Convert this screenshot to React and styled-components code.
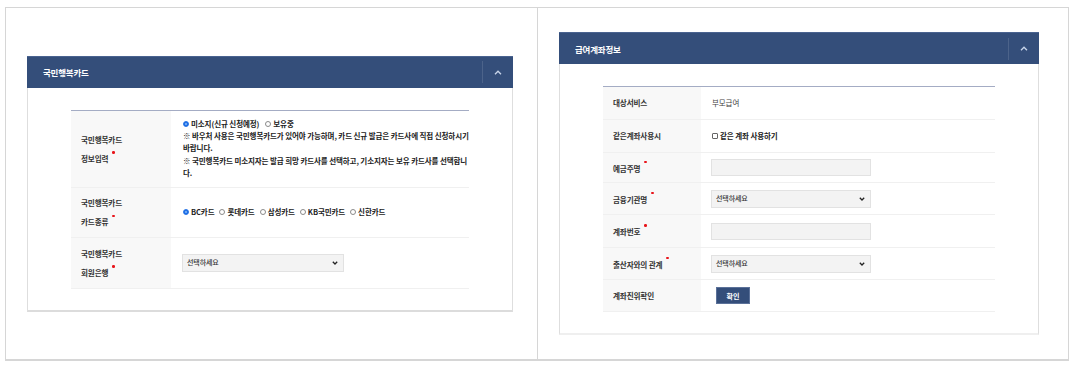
import React from "react";
import styled, { createGlobalStyle } from "styled-components";

const Global = createGlobalStyle`
  html, body { margin: 0; padding: 0; background: #fff; }
  body { font-family: "Noto Sans CJK KR", "Noto Sans", sans-serif; color: #333; }
`;

const Frame = styled.div`
  margin: 7px 0 0 5px;
  width: 1064px;
  height: 354px;
  box-sizing: border-box;
  border: 1px solid #d6d6d6;
  border-bottom-width: 2px;
  display: grid;
  grid-template-columns: 531px 1fr;
`;

const Cell = styled.div`
  display: flex;
  align-items: center;
  padding-left: ${(p) => p.$pl}px;
  border-left: ${(p) => (p.$divider ? "1px solid #d6d6d6" : "none")};
`;

const Card = styled.div`
  width: ${(p) => p.$w}px;
  box-sizing: border-box;
  border: 1px solid #dedede;
  border-top: none;
  border-bottom: 2px solid ${(p) => (p.$softBottom ? "#efefef" : "#dcdcdc")};
  background: #fff;
`;

const Header = styled.div`
  height: 32px;
  margin: 0 -1px;
  background: #344e7a;
  border-top: 1px solid #4a6390;
  box-sizing: border-box;
  display: flex;
  align-items: center;
  justify-content: space-between;
  padding-left: 16px;
`;

const Title = styled.h3`
  margin: 0;
  font-size: 8.5px;
  font-weight: 700;
  color: #fff;
  letter-spacing: -0.2px;
`;

const Toggle = styled.div`
  width: 30px;
  height: 22px;
  border-left: 1px solid rgba(255, 255, 255, 0.12);
  display: flex;
  align-items: center;
  justify-content: center;
`;

const Body = styled.div`
  padding: 22px 43px 21px 43px;
`;

const Table = styled.div`
  border-top: 1px solid #a4acc4;
  display: grid;
  grid-template-columns: ${(p) => p.$label}px 1fr;
`;

const Label = styled.div`
  background: #f8f8f8;
  border-bottom: 1px solid #f0f0f0;
  min-height: ${(p) => p.$h}px;
  box-sizing: border-box;
  padding-left: 10px;
  display: flex;
  align-items: center;
  font-size: 7.6px;
  font-weight: 700;
  color: #333;
  line-height: ${(p) => (p.$tall ? "19px" : "12px")};
  letter-spacing: -0.15px;
`;

const Value = styled.div`
  border-bottom: 1px solid #f0f0f0;
  min-height: ${(p) => p.$h}px;
  box-sizing: border-box;
  padding-left: ${(p) => p.$pl || 11}px;
  display: flex;
  flex-direction: column;
  justify-content: center;
  font-size: 7.5px;
  font-weight: 700;
  color: #222;
  line-height: 12.3px;
  letter-spacing: -0.1px;
`;

const Plain = styled.span`
  font-weight: 400;
  color: #444;
`;

const Req = styled.span`
  display: inline-block;
  width: 2.5px;
  height: 2.5px;
  border-radius: 50%;
  background: #e8151b;
  margin-left: 4px;
  vertical-align: 8px;
`;

const Line = styled.div`
  white-space: nowrap;
`;

const Options = styled.div`
  display: flex;
  align-items: center;
  gap: ${(p) => p.$gap || 5}px;
`;

const Option = styled.span`
  display: inline-flex;
  align-items: center;
  gap: 2px;
  white-space: nowrap;
`;

const Radio = styled.span`
  display: inline-block;
  width: 6px;
  height: 6px;
  box-sizing: border-box;
  border-radius: 50%;
  border: 1px solid ${(p) => (p.$on ? "#1f6fe5" : "#8a8a8a")};
  background: ${(p) =>
    p.$on ? "radial-gradient(circle, #6aa6f5 0 1.2px, #1f6fe5 1.4px)" : "#fff"};
`;

const Check = styled.span`
  display: inline-block;
  width: 6px;
  height: 6px;
  box-sizing: border-box;
  border: 1px solid #666;
  border-radius: 1px;
  margin-right: 0;
`;

const SelectBox = styled.div`
  width: ${(p) => p.$w}px;
  height: 18px;
  box-sizing: border-box;
  background: #f3f3f3;
  border: 1px solid #e2e2e2;
  display: flex;
  align-items: center;
  justify-content: space-between;
  padding: 0 5px 0 4px;
  font-size: 7px;
  font-weight: 500;
  color: #333;
`;

const Input = styled.div`
  width: 160px;
  height: 17px;
  box-sizing: border-box;
  background: #f3f3f3;
  border: 1px solid #e2e2e2;
`;

const Button = styled.button`
  width: 34px;
  height: 17px;
  margin-left: 5px;
  padding: 0;
  background: #344e7a;
  border: 1px solid #5b7199;
  color: #fff;
  font-family: inherit;
  font-size: 7px;
  font-weight: 700;
  cursor: pointer;
`;

const Chevron = ({ color = "#c9d5ea" }) => (
  <svg width="8" height="5" viewBox="0 0 8 5">
    <polyline points="1,4.2 4,1.2 7,4.2" fill="none" stroke={color} strokeWidth="1.3" />
  </svg>
);

const Down = () => (
  <svg width="6" height="4" viewBox="0 0 6 4">
    <polyline points="0.8,0.8 3,3 5.2,0.8" fill="none" stroke="#222" strokeWidth="1.3" />
  </svg>
);

const Select = ({ w }) => (
  <SelectBox $w={w}>
    <span>선택하세요</span>
    <Down />
  </SelectBox>
);

const Panel = ({ title, w, softBottom, children }) => (
  <Card $w={w} $softBottom={softBottom}>
    <Header>
      <Title>{title}</Title>
      <Toggle>
        <Chevron />
      </Toggle>
    </Header>
    <Body>{children}</Body>
  </Card>
);

const cards = ["BC카드", "롯데카드", "삼성카드", "KB국민카드", "신한카드"];

export default function App() {
  return (
    <>
      <Global />
      <Frame>
        <Cell $pl={21}>
          <Panel title="국민행복카드" w={486}>
            <Table $label={100}>
              <Label $h={77} $tall>
                <div>
                  국민행복카드
                  <br />
                  정보입력
                  <Req />
                </div>
              </Label>
              <Value $h={77} $pl={12}>
                <Options $gap={6}>
                  <Option>
                    <Radio $on />
                    미소지(신규 신청예정)
                  </Option>
                  <Option>
                    <Radio />
                    보유중
                  </Option>
                </Options>
                <Line>※ 바우처 사용은 국민행복카드가 있어야 가능하며, 카드 신규 발급은 카드사에 직접 신청하시기</Line>
                <Line>바랍니다.</Line>
                <Line>※ 국민행복카드 미소지자는 발급 희망 카드사를 선택하고, 기소지자는 보유 카드사를 선택합니</Line>
                <Line>다.</Line>
              </Value>

              <Label $h={50} $tall>
                <div>
                  국민행복카드
                  <br />
                  카드종류
                  <Req />
                </div>
              </Label>
              <Value $h={50} $pl={12}>
                <Options>
                  {cards.map((c, i) => (
                    <Option key={c}>
                      <Radio $on={i === 0} />
                      {c}
                    </Option>
                  ))}
                </Options>
              </Value>

              <Label $h={51} $tall>
                <div>
                  국민행복카드
                  <br />
                  회원은행
                  <Req />
                </div>
              </Label>
              <Value $h={51} $pl={11}>
                <Select w={162} />
              </Value>
            </Table>
          </Panel>
        </Cell>

        <Cell $pl={21} $divider>
          <Panel title="급여계좌정보" w={480} softBottom>
            <Table $label={98}>
              <Label $h={33}>대상서비스</Label>
              <Value $h={33}>
                <Plain>부모급여</Plain>
              </Value>

              <Label $h={33}>같은계좌사용시</Label>
              <Value $h={33}>
                <Option>
                  <Check />
                  같은 계좌 사용하기
                </Option>
              </Value>

              <Label $h={30}>
                <span>
                  예금주명
                  <Req />
                </span>
              </Label>
              <Value $h={30} $pl={10}>
                <Input />
              </Value>

              <Label $h={32}>
                <span>
                  금융기관명
                  <Req />
                </span>
              </Label>
              <Value $h={32} $pl={10}>
                <Select w={160} />
              </Value>

              <Label $h={33}>
                <span>
                  계좌번호
                  <Req />
                </span>
              </Label>
              <Value $h={33} $pl={10}>
                <Input />
              </Value>

              <Label $h={32}>
                <span>
                  출산자와의 관계
                  <Req />
                </span>
              </Label>
              <Value $h={32} $pl={10}>
                <Select w={160} />
              </Value>

              <Label $h={32}>계좌진위확인</Label>
              <Value $h={32} $pl={10}>
                <div>
                  <Button>확인</Button>
                </div>
              </Value>
            </Table>
          </Panel>
        </Cell>
      </Frame>
    </>
  );
}
